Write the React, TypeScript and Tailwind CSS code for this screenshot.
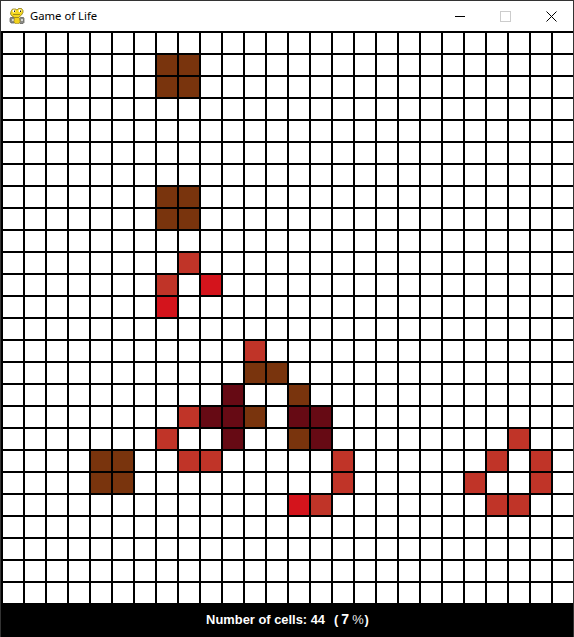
const FONT = { fontFamily: '"Liberation Sans", Arial, sans-serif' };

const BROWN = 'bg-[#79340d]';
const RED = 'bg-[#c03428]';
const BRIGHT = 'bg-[#d4141c]';
const DARK = 'bg-[#660a14]';

// row -> col -> colour
const CELLS: Record<string, string> = {
    '1,7': BROWN, '1,8': BROWN, '2,7': BROWN, '2,8': BROWN,
    '7,7': BROWN, '7,8': BROWN, '8,7': BROWN, '8,8': BROWN,
    '10,8': RED, '11,7': RED, '11,9': BRIGHT, '12,7': BRIGHT,
    '14,11': RED, '15,11': BROWN, '15,12': BROWN,
    '16,10': DARK, '16,13': BROWN,
    '17,8': RED, '17,9': DARK, '17,10': DARK, '17,11': BROWN, '17,13': DARK, '17,14': DARK,
    '18,7': RED, '18,10': DARK, '18,13': BROWN, '18,14': DARK, '18,23': RED,
    '19,4': BROWN, '19,5': BROWN, '19,8': RED, '19,9': RED, '19,15': RED, '19,22': RED, '19,24': RED,
    '20,4': BROWN, '20,5': BROWN, '20,15': RED, '20,21': RED, '20,24': RED,
    '21,13': BRIGHT, '21,14': RED, '21,22': RED, '21,23': RED,
};

// pygame snake, 16x16 like the real window icon
function PygameIcon() {
    return (
        <svg width="16" height="16" viewBox="0 0 16 16" className="shrink-0">
            {/* controller */}
            <path d="M1.5 9.5h4l1 1h4l1-1h3l.5 1v4l-1 1h-3l-1-1h-4l-1 .5h-3l-1-1.5v-3z" fill="#8a8a86" stroke="#55554f" strokeWidth="0.7" />
            <rect x="3" y="11" width="2" height="2" fill="#d8d8d2" />
            <rect x="12" y="11" width="2" height="2" fill="#d8d8d2" />
            {/* body */}
            <path d="M5.5 8.5h4l1 2 .5 3-1 2h-4l-1-2z" fill="#f2d21c" stroke="#9a8420" strokeWidth="0.6" />
            {/* head */}
            <path d="M2 3.5 3.5 1h3L8 2l1.5-1.5h3L14 2.5v2L12.5 7l-3 2.5h-4L3 8 1.5 6z" fill="#f5d81e" stroke="#8c7a1c" strokeWidth="0.8" />
            <circle cx="5" cy="3" r="1.5" fill="#ffffff" />
            <circle cx="11" cy="2.8" r="1.5" fill="#ffffff" />
            <rect x="5" y="2.5" width="1" height="1.5" fill="#222" />
            <rect x="11" y="2.5" width="1" height="1.5" fill="#222" />
            <path d="M4 6.5h7" stroke="#8c7a1c" strokeWidth="0.8" />
        </svg>
    );
}

function TitleBar() {
    return (
        <div className="flex h-[30px] items-center bg-white pl-[8px] pr-[16px]">
            <PygameIcon />
            <span className="ml-[5px] text-[11.3px] text-black" style={{ fontFamily: '"Noto Sans", sans-serif' }}>Game of Life</span>
            <div className="ml-auto flex items-center">
                <div className="h-px w-[10px] bg-black" />
                <div className="ml-[35px] h-[11px] w-[11px] border border-[#cccccc]" />
                <svg width="11" height="11" viewBox="0 0 11 11" className="ml-[35px]">
                    <path d="M.5.5 10.5 10.5M10.5.5.5 10.5" stroke="#000" strokeWidth="1" fill="none" />
                </svg>
            </div>
        </div>
    );
}

export default function App() {
    const cells = [];
    for (let r = 0; r < 26; r++) {
        for (let c = 0; c < 26; c++) {
            cells.push(<div key={`${r},${c}`} className={CELLS[`${r},${c}`] ?? 'bg-white'} />);
        }
    }

    return (
        <div className="h-[637px] w-[574px] overflow-hidden border border-b-0 border-[#333333] bg-black" style={FONT}>
            <TitleBar />
            <div className="grid grid-cols-[repeat(26,20px)] grid-rows-[repeat(26,20px)] gap-[2px] bg-black pl-[2px] pt-[2px]">
                {cells}
            </div>
            <div className="flex h-[33px] items-center justify-center whitespace-pre pl-[1px] text-[12.9px] font-bold text-white">
                <span>Number of cells: 44</span>
                <span className="ml-[9px]">(</span>
                <span className="ml-[3px] text-[14px]">7</span>
                <span className="ml-[3px] font-normal text-[#e8e8e8]">%</span>
                <span className="ml-[1px]">)</span>
            </div>
        </div>
    );
}
